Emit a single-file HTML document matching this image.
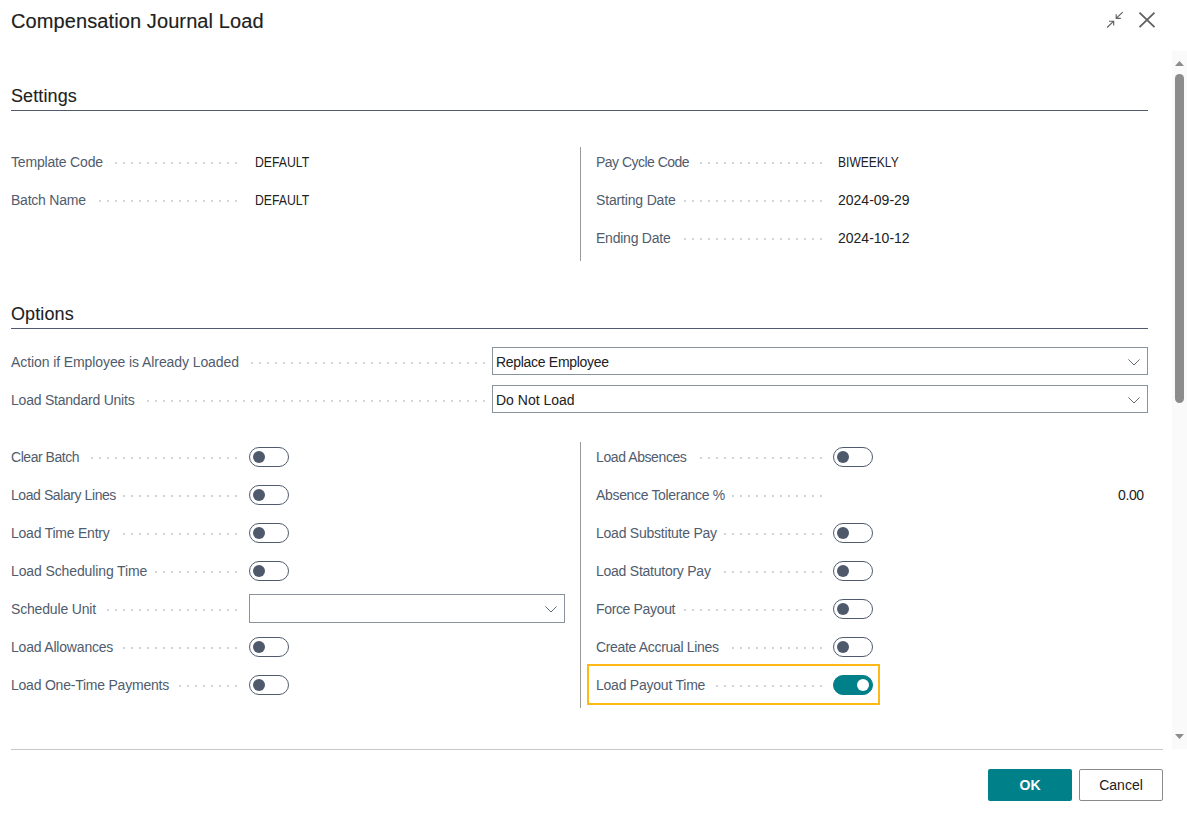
<!DOCTYPE html>
<html><head><meta charset="utf-8">
<style>
html,body{margin:0;padding:0;background:#fff;width:1187px;height:813px;overflow:hidden;position:relative;font-family:"Liberation Sans",sans-serif;}
.a{position:absolute;white-space:nowrap;}
.title{left:11px;top:10.6px;font-size:20px;line-height:20px;color:#212121;letter-spacing:0.1px;-webkit-text-stroke:0.15px #212121;}
.h{left:11px;font-size:18px;line-height:18px;color:#212121;letter-spacing:0.1px;-webkit-text-stroke:0.1px #212121;}
.hl{position:absolute;left:11px;width:1137px;height:1px;background:#505c6d;}
.lbl{font-size:14px;line-height:16px;color:#505c6d;}
.val{font-size:14px;line-height:16px;color:#212121;}
.dots{position:absolute;height:2px;background-image:linear-gradient(90deg,#d0d4da 2px,transparent 2px);background-size:8px 2px;}
.sep{position:absolute;left:580px;width:1px;background:#999;}
.tg{position:absolute;width:38px;height:18px;border:1px solid #505c6d;border-radius:10px;}
.tg::after{content:"";position:absolute;left:3px;top:3px;width:12px;height:12px;border-radius:50%;background:#4e5a6c;}
.tg.on{background:#008089;border-color:#008089;}
.tg.on::after{left:23px;background:#fff;}
.dd{position:absolute;border:1px solid #8a929e;box-sizing:border-box;}
.btn{border-radius:2px;font-size:14px;text-align:center;}
.ok{background:#008089;color:#fff;font-weight:bold;line-height:32px;}
.cancel{border:1px solid #8a8a8a;color:#212121;line-height:30px;}
</style></head><body>
<div class="a title">Compensation Journal Load</div>
<svg class="a" style="left:1104px;top:9px" width="22" height="22" viewBox="0 0 22 22">
  <g stroke="#606060" stroke-width="1.15" fill="none">
    <path d="M3.1 18.5 L9.7 12.2 M5 12.2 H9.7 V16.5"/>
    <path d="M18.7 3.1 L12.2 9.4 M12.2 5.3 V9.4 H16.8"/>
  </g>
</svg>
<svg class="a" style="left:1136px;top:9px" width="22" height="22" viewBox="0 0 22 22">
  <path d="M3.5 3.7 L18.5 18.2 M18.5 3.7 L3.5 18.2" stroke="#606060" stroke-width="1.8" fill="none"/>
</svg>
<div class="a" style="left:1172px;top:51px;width:15px;height:698px;background:#fafafa"></div>
<svg class="a" style="left:1172px;top:51px" width="15" height="698">
  <path d="M3 15 L7.5 10 L12 15 Z" fill="#8c8c8c"/>
  <rect x="3" y="23" width="9" height="329" rx="4.5" fill="#8c8c8c"/>
  <path d="M3 683 L12 683 L7.5 688 Z" fill="#8c8c8c"/>
</svg>
<div class="a h" style="top:87px">Settings</div>
<div class="hl" style="top:110px"></div>
<div class="dots" style="left:115px;top:162px;width:122px"></div>
<div class="a lbl" style="left:11px;top:154px;letter-spacing:-0.175px">Template Code</div>
<div class="a val" style="left:254.5px;top:154px;transform:scaleX(0.875);transform-origin:0 0">DEFAULT</div>
<div class="dots" style="left:99px;top:200px;width:138px"></div>
<div class="a lbl" style="left:11px;top:192px;letter-spacing:-0.233px">Batch Name</div>
<div class="a val" style="left:254.5px;top:192px;transform:scaleX(0.875);transform-origin:0 0">DEFAULT</div>
<div class="sep" style="top:147px;height:114px"></div>
<div class="dots" style="left:700px;top:162px;width:122px"></div>
<div class="a lbl" style="left:596px;top:154px;letter-spacing:-0.523px">Pay Cycle Code</div>
<div class="a val" style="left:838px;top:154px;transform:scaleX(0.86);transform-origin:0 0">BIWEEKLY</div>
<div class="dots" style="left:684px;top:200px;width:138px"></div>
<div class="a lbl" style="left:596px;top:192px;letter-spacing:-0.167px">Starting Date</div>
<div class="a val" style="left:838px;top:192px">2024-09-29</div>
<div class="dots" style="left:684px;top:238px;width:138px"></div>
<div class="a lbl" style="left:596px;top:230px;letter-spacing:-0.230px">Ending Date</div>
<div class="a val" style="left:838px;top:230px">2024-10-12</div>
<div class="a h" style="top:305px">Options</div>
<div class="hl" style="top:328px"></div>
<div class="dots" style="left:251px;top:362px;width:234px"></div>
<div class="a lbl" style="left:11px;top:354px;letter-spacing:-0.091px">Action if Employee is Already Loaded</div>
<div class="dd" style="left:492px;top:347px;width:656px;height:28px"></div>
<div class="a val" style="left:496px;top:354px;letter-spacing:-0.3px">Replace Employee</div>
<svg class="a" style="left:1127px;top:358px" width="14" height="9"><path d="M1.4 1.4 L7 7 L12.6 1.4" stroke="#505c6d" stroke-width="0.9" fill="none"/></svg>
<div class="dots" style="left:147px;top:400px;width:338px"></div>
<div class="a lbl" style="left:11px;top:392px;letter-spacing:-0.222px">Load Standard Units</div>
<div class="dd" style="left:492px;top:385px;width:656px;height:28px"></div>
<div class="a val" style="left:496px;top:392px">Do Not Load</div>
<svg class="a" style="left:1127px;top:396px" width="14" height="9"><path d="M1.4 1.4 L7 7 L12.6 1.4" stroke="#505c6d" stroke-width="0.9" fill="none"/></svg>
<div class="dots" style="left:91px;top:457px;width:146px"></div>
<div class="a lbl" style="left:11px;top:449px;letter-spacing:-0.460px">Clear Batch</div>
<div class="tg" style="left:249px;top:447px"></div>
<div class="dots" style="left:123px;top:495px;width:114px"></div>
<div class="a lbl" style="left:11px;top:487px;letter-spacing:-0.419px">Load Salary Lines</div>
<div class="tg" style="left:249px;top:485px"></div>
<div class="dots" style="left:123px;top:533px;width:114px"></div>
<div class="a lbl" style="left:11px;top:525px;letter-spacing:-0.229px">Load Time Entry</div>
<div class="tg" style="left:249px;top:523px"></div>
<div class="dots" style="left:155px;top:571px;width:82px"></div>
<div class="a lbl" style="left:11px;top:563px;letter-spacing:-0.116px">Load Scheduling Time</div>
<div class="tg" style="left:249px;top:561px"></div>
<div class="dots" style="left:107px;top:609px;width:130px"></div>
<div class="a lbl" style="left:11px;top:601px;letter-spacing:-0.167px">Schedule Unit</div>
<div class="dd" style="left:249px;top:594px;width:316px;height:29px"></div>
<svg class="a" style="left:544px;top:605px" width="14" height="9"><path d="M1.4 1.4 L7 7 L12.6 1.4" stroke="#505c6d" stroke-width="0.9" fill="none"/></svg>
<div class="dots" style="left:123px;top:647px;width:114px"></div>
<div class="a lbl" style="left:11px;top:639px;letter-spacing:-0.193px">Load Allowances</div>
<div class="tg" style="left:249px;top:637px"></div>
<div class="dots" style="left:179px;top:685px;width:58px"></div>
<div class="a lbl" style="left:11px;top:677px;letter-spacing:-0.224px">Load One-Time Payments</div>
<div class="tg" style="left:249px;top:675px"></div>
<div class="sep" style="top:442px;height:266px"></div>
<div class="dots" style="left:700px;top:457px;width:122px"></div>
<div class="a lbl" style="left:596px;top:449px;letter-spacing:-0.408px">Load Absences</div>
<div class="tg" style="left:833px;top:447px"></div>
<div class="dots" style="left:732px;top:495px;width:90px"></div>
<div class="a lbl" style="left:596px;top:487px;letter-spacing:-0.333px">Absence Tolerance %</div>
<div class="a val" style="left:1118px;top:487px;letter-spacing:-0.4px">0.00</div>
<div class="dots" style="left:724px;top:533px;width:98px"></div>
<div class="a lbl" style="left:596px;top:525px;letter-spacing:-0.233px">Load Substitute Pay</div>
<div class="tg" style="left:833px;top:523px"></div>
<div class="dots" style="left:724px;top:571px;width:98px"></div>
<div class="a lbl" style="left:596px;top:563px;letter-spacing:-0.247px">Load Statutory Pay</div>
<div class="tg" style="left:833px;top:561px"></div>
<div class="dots" style="left:684px;top:609px;width:138px"></div>
<div class="a lbl" style="left:596px;top:601px;letter-spacing:-0.345px">Force Payout</div>
<div class="tg" style="left:833px;top:599px"></div>
<div class="dots" style="left:732px;top:647px;width:90px"></div>
<div class="a lbl" style="left:596px;top:639px;letter-spacing:-0.326px">Create Accrual Lines</div>
<div class="tg" style="left:833px;top:637px"></div>
<div class="a" style="left:587px;top:664px;width:289px;height:37px;border:2px solid #ffb914"></div>
<div class="dots" style="left:716px;top:685px;width:106px"></div>
<div class="a lbl" style="left:596px;top:677px;letter-spacing:-0.233px">Load Payout Time</div>
<div class="tg on" style="left:833px;top:675px"></div>
<div class="a" style="left:11px;top:749px;width:1152px;height:1px;background:#c8c8c8"></div>
<div class="a btn ok" style="left:988px;top:769px;width:84px;height:32px;">OK</div>
<div class="a btn cancel" style="left:1079px;top:769px;width:82px;height:30px;">Cancel</div>
</body></html>
